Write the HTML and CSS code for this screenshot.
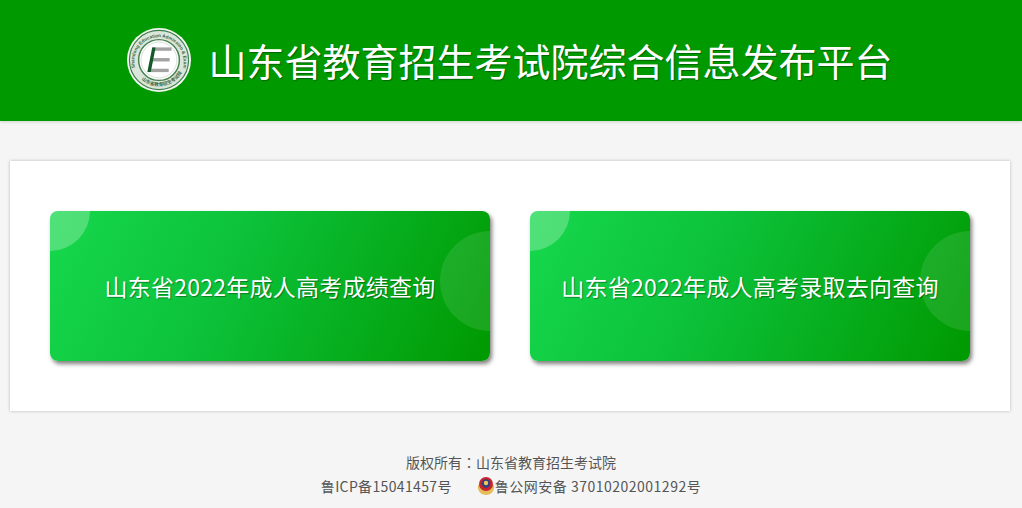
FILE: index.html
```html
<!DOCTYPE html>
<html lang="zh-CN">
<head>
  <meta charset="UTF-8">
  <title>山东省教育招生考试院综合信息发布平台</title>
  <link rel="stylesheet" href="styles.css">
</head>
<body>
  <div class="header">
    <svg class="logo" width="64" height="64" viewBox="0 0 66 66">
      <defs>
        <path id="logoArc" d="M8.5 42a25.5 25.5 0 1 1 49 0"/>
        <path id="logoArcLow" d="M10 47a27 27 0 0 0 46 0"/>
      </defs>
      <circle cx="33" cy="33" r="33" fill="#f4f7f2"/>
      <circle cx="33" cy="33" r="30.5" fill="#dbe6db" stroke="#3c7d49" stroke-width="1.2"/>
      <circle cx="33" cy="33" r="21" fill="#fff" stroke="#46804f" stroke-width="1.5"/>
      <circle cx="33" cy="33" r="18.5" fill="#fff" stroke="#c9d8c9" stroke-width="0.8"/>
      <text class="logo-text"><textPath href="#logoArc" startOffset="1">Shandong Education Admission &amp; Exam</textPath></text>
      <text class="logo-text logo-text-cn"><textPath href="#logoArcLow" startOffset="8">山东省教育招生考试院</textPath></text>
      <rect x="26" y="20" width="20" height="3.5" fill="#a3a3a3"/>
      <rect x="24" y="31" width="20" height="3.5" fill="#a3a3a3"/>
      <rect x="22" y="42" width="21" height="3.5" fill="#a3a3a3"/>
      <path d="M26 20l-5 25.5h3.5l5-25.5z" fill="#14592a"/>
    </svg>
    <h1>山东省教育招生考试院综合信息发布平台</h1>
  </div>

  <div class="panel">
    <a class="query-btn" href="#">山东省2022年成人高考成绩查询</a>
    <a class="query-btn" href="#">山东省2022年成人高考录取去向查询</a>
  </div>

  <div class="footer">
    <p>版权所有<span class="colon" lang="zh-TW">：</span>山东省教育招生考试院</p>
    <p class="footer-row">
      <span class="icp">鲁ICP备15041457号</span>
      <svg class="badge" width="18" height="20" viewBox="0 0 18 20">
        <path d="M1 9c-1 6 3 10 8 10s9-4 8-10z" fill="#e6bd5c"/>
        <circle cx="9" cy="8" r="7" fill="#c8242b"/>
        <circle cx="9" cy="7.5" r="4.2" fill="#2f3f86"/>
        <circle cx="9" cy="7" r="2.2" fill="#f0c95a"/>
      </svg>
      <span class="beian">鲁公网安备 37010202001292号</span>
    </p>
  </div>
</body>
</html>
```

FILE: styles.css
```css
/* Base Styles */
body {
  margin: 0;
  background: #f5f5f5;
  font-family: "Noto Sans CJK SC", "Noto Sans", sans-serif;
  color: #555;
}

.header {
  height: 121px;
  background: #009900;
  box-shadow: 0 1px 3px rgba(0, 0, 0, 0.15);
  display: flex;
  align-items: center;
  justify-content: center;
  gap: 17px;
}

.logo {
  margin-left: -2px;
  margin-top: -1px;
}

.logo-text {
  font-family: "Liberation Sans", sans-serif;
  font-size: 4.8px;
  font-weight: 700;
  fill: #39663f;
}

.logo-text-cn {
  font-family: "Noto Sans CJK SC", sans-serif;
  font-size: 4.8px;
}

.header h1 {
  margin: -2px 0 0;
  font-size: 38px;
  font-weight: 400;
  line-height: 1;
  color: #fff;
  text-shadow: 1px 1px 1px rgba(0, 0, 0, 0.35);
}

.panel {
  margin: 40px 12px 0 10px;
  height: 250px;
  box-sizing: border-box;
  padding: 50px 40px;
  background: #fff;
  box-shadow: 0 0 3px rgba(0, 0, 0, 0.25);
  display: flex;
  justify-content: space-between;
}

.query-btn {
  position: relative;
  overflow: hidden;
  width: 440px;
  height: 150px;
  border-radius: 8px;
  background: linear-gradient(115deg, #16d84d 0%, #0cc23a 40%, #009900 100%);
  box-shadow: 2px 3px 4px rgba(0, 0, 0, 0.5);
  display: flex;
  align-items: center;
  justify-content: center;
  font-size: 23px;
  letter-spacing: 0.25px;
  color: #fff;
  text-decoration: none;
  text-shadow: 1px 1px 1px rgba(0, 0, 0, 0.35);
}

/* Decorative circles on each button */
.query-btn::before {
  content: "";
  position: absolute;
  left: -40px;
  top: -40px;
  width: 80px;
  height: 80px;
  border-radius: 50%;
  background: rgba(255, 255, 255, 0.25);
}

.query-btn::after {
  content: "";
  position: absolute;
  right: -50px;
  top: 20px;
  width: 100px;
  height: 100px;
  border-radius: 50%;
  background: rgba(255, 255, 255, 0.1);
}

.footer {
  margin-top: 39px;
  text-align: center;
  font-size: 14px;
  line-height: 24px;
  color: #555;
}

.footer p {
  margin: 0;
}

.colon {
  font-family: "Noto Sans CJK TC", sans-serif;
}

.footer-row {
  display: flex;
  align-items: center;
  justify-content: center;
  letter-spacing: 0.35px;
}

.icp {
  margin-right: 25px;
}

.badge {
  margin-right: 0;
}

.beian {
  letter-spacing: 0.5px;
}
```
